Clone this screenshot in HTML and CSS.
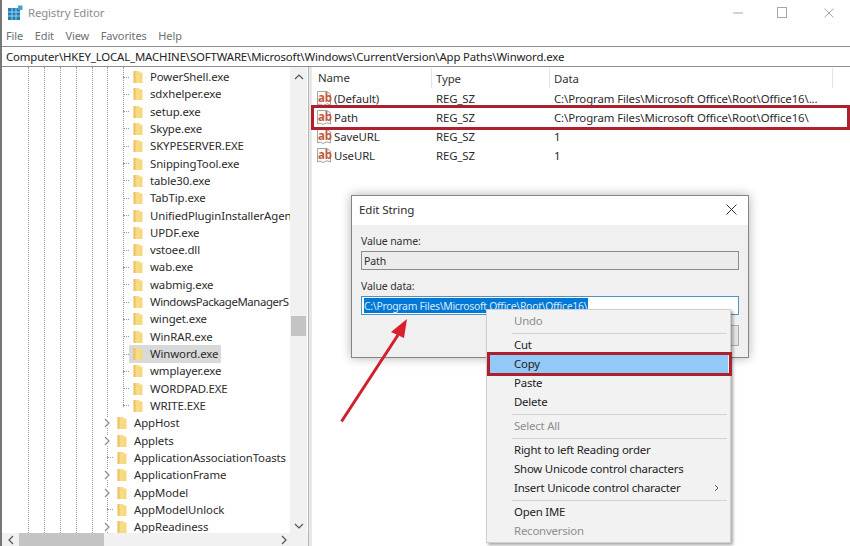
FILE: index.html
```html
<!DOCTYPE html>
<html lang="en">
<head>
<meta charset="utf-8">
<title>Registry Editor</title>
<link rel="stylesheet" href="styles.css">
</head>
<body>
<svg class="defs" width="0" height="0" aria-hidden="true">
  <defs>
    <linearGradient id="fold" x1="0" x2="1" y1="0" y2="0">
      <stop offset="0" stop-color="#e3b850"/>
      <stop offset="0.35" stop-color="#f8dc88"/>
      <stop offset="1" stop-color="#f6d77c"/>
    </linearGradient>
    <symbol id="folder" viewBox="0 0 10 14">
      <path d="M0.5 1H6L7 2.5H9.5V13H0.5Z" fill="url(#fold)"/>
    </symbol>
    <symbol id="chev" viewBox="0 0 8 10">
      <path d="M2 1L6 5L2 9" fill="none" stroke="#8a8a8a" stroke-width="1.2"/>
    </symbol>
    <symbol id="strval" viewBox="0 0 16 17">
      <path d="M1.5 1.5H11L14.5 4V15L11 13.8 7 15.5 4 14 1.5 15Z" fill="#fbfbfb" stroke="#9a9a9a" stroke-width="0.9"/>
    </symbol>
  </defs>
</svg>

<div class="window">
  <header class="titlebar">
    <svg class="app-icon" width="15" height="16" viewBox="0 0 15 16">
      <rect x="0" y="3" width="12" height="12" fill="#1f7fb8"/>
      <path d="M4 3V15M8 3V15M0 7H12M0 11H12" stroke="#bfe0ef" stroke-width="0.8"/>
      <rect x="10" y="0.5" width="4.5" height="4.5" fill="#3fa6c9"/>
    </svg>
    <span class="title">Registry Editor</span>
    <div class="controls">
      <svg width="10" height="2" viewBox="0 0 10 2"><path d="M0 1H10" stroke="#a8a8a8"/></svg>
      <svg width="10" height="11" viewBox="0 0 10 11"><rect x="0.5" y="0.5" width="9" height="10" fill="none" stroke="#a8a8a8"/></svg>
      <svg class="ctl-close" width="10" height="10" viewBox="0 0 10 10"><path d="M0.5 0.5L9.5 9.5M9.5 0.5L0.5 9.5" stroke="#a8a8a8"/></svg>
    </div>
  </header>
  <nav class="menubar">
    <span>File</span><span>Edit</span><span>View</span><span>Favorites</span><span>Help</span>
  </nav>
  <div class="address">Computer\HKEY_LOCAL_MACHINE\SOFTWARE\Microsoft\Windows\CurrentVersion\App Paths\Winword.exe</div>

  <main class="panes">
    <section class="tree-pane">
      <div class="tree-view">
        <div class="tree">
          <div class="guides"><i></i><i></i><i></i><i></i><i></i><i class="guide-short"></i><i class="guide-inner"></i></div>
          <div class="node leaf"><b class="tick"></b><svg class="folder"><use href="#folder"/></svg><span>PowerShell.exe</span></div>
          <div class="node leaf"><b class="tick"></b><svg class="folder"><use href="#folder"/></svg><span>sdxhelper.exe</span></div>
          <div class="node leaf"><b class="tick"></b><svg class="folder"><use href="#folder"/></svg><span>setup.exe</span></div>
          <div class="node leaf"><b class="tick"></b><svg class="folder"><use href="#folder"/></svg><span>Skype.exe</span></div>
          <div class="node leaf"><b class="tick"></b><svg class="folder"><use href="#folder"/></svg><span>SKYPESERVER.EXE</span></div>
          <div class="node leaf"><b class="tick"></b><svg class="folder"><use href="#folder"/></svg><span>SnippingTool.exe</span></div>
          <div class="node leaf"><b class="tick"></b><svg class="folder"><use href="#folder"/></svg><span>table30.exe</span></div>
          <div class="node leaf"><b class="tick"></b><svg class="folder"><use href="#folder"/></svg><span>TabTip.exe</span></div>
          <div class="node leaf"><b class="tick"></b><svg class="folder"><use href="#folder"/></svg><span>UnifiedPluginInstallerAgen</span></div>
          <div class="node leaf"><b class="tick"></b><svg class="folder"><use href="#folder"/></svg><span>UPDF.exe</span></div>
          <div class="node leaf"><b class="tick"></b><svg class="folder"><use href="#folder"/></svg><span>vstoee.dll</span></div>
          <div class="node leaf"><b class="tick"></b><svg class="folder"><use href="#folder"/></svg><span>wab.exe</span></div>
          <div class="node leaf"><b class="tick"></b><svg class="folder"><use href="#folder"/></svg><span>wabmig.exe</span></div>
          <div class="node leaf"><b class="tick"></b><svg class="folder"><use href="#folder"/></svg><span class="tight">WindowsPackageManagerS</span></div>
          <div class="node leaf"><b class="tick"></b><svg class="folder"><use href="#folder"/></svg><span>winget.exe</span></div>
          <div class="node leaf"><b class="tick"></b><svg class="folder"><use href="#folder"/></svg><span>WinRAR.exe</span></div>
          <div class="node leaf selected"><b class="tick"></b><svg class="folder"><use href="#folder"/></svg><span>Winword.exe</span></div>
          <div class="node leaf"><b class="tick"></b><svg class="folder"><use href="#folder"/></svg><span>wmplayer.exe</span></div>
          <div class="node leaf"><b class="tick"></b><svg class="folder"><use href="#folder"/></svg><span>WORDPAD.EXE</span></div>
          <div class="node leaf"><b class="tick"></b><svg class="folder"><use href="#folder"/></svg><span>WRITE.EXE</span></div>
          <div class="node branch"><svg class="chev"><use href="#chev"/></svg><svg class="folder"><use href="#folder"/></svg><span>AppHost</span></div>
          <div class="node branch"><svg class="chev"><use href="#chev"/></svg><svg class="folder"><use href="#folder"/></svg><span>Applets</span></div>
          <div class="node branch"><b class="tick tick-top"></b><svg class="folder"><use href="#folder"/></svg><span>ApplicationAssociationToasts</span></div>
          <div class="node branch"><svg class="chev"><use href="#chev"/></svg><svg class="folder"><use href="#folder"/></svg><span>ApplicationFrame</span></div>
          <div class="node branch"><svg class="chev"><use href="#chev"/></svg><svg class="folder"><use href="#folder"/></svg><span>AppModel</span></div>
          <div class="node branch"><b class="tick tick-top"></b><svg class="folder"><use href="#folder"/></svg><span>AppModelUnlock</span></div>
          <div class="node branch"><svg class="chev"><use href="#chev"/></svg><svg class="folder"><use href="#folder"/></svg><span>AppReadiness</span></div>
        </div>
        <div class="vscroll">
          <svg width="10" height="6" viewBox="0 0 10 6"><path d="M1 5L5 1L9 5" fill="none" stroke="#555" stroke-width="1.2"/></svg>
          <div class="vtrack"><div class="vthumb"></div></div>
          <svg width="10" height="6" viewBox="0 0 10 6"><path d="M1 1L5 5L9 1" fill="none" stroke="#555" stroke-width="1.2"/></svg>
        </div>
      </div>
      <div class="hscroll">
        <svg width="6" height="10" viewBox="0 0 6 10"><path d="M5 1L1 5L5 9" fill="none" stroke="#555" stroke-width="1.2"/></svg>
        <div class="hthumb"></div>
        <svg width="6" height="10" viewBox="0 0 6 10"><path d="M1 1L5 5L1 9" fill="none" stroke="#555" stroke-width="1.2"/></svg>
      </div>
    </section>

    <section class="list-pane">
      <div class="list-row list-head">
        <span class="col-name">Name</span><span class="col-type">Type</span><span class="col-data">Data</span>
      </div>
      <div class="list-row">
        <span class="col-name"><span class="ab"><svg class="ab-page"><use href="#strval"/></svg><span class="ab-text">ab</span></span>(Default)</span>
        <span class="col-type">REG_SZ</span><span class="col-data">C:\Program Files\Microsoft Office\Root\Office16\...</span>
      </div>
      <div class="list-row">
        <span class="col-name"><span class="ab"><svg class="ab-page"><use href="#strval"/></svg><span class="ab-text">ab</span></span>Path</span>
        <span class="col-type">REG_SZ</span><span class="col-data">C:\Program Files\Microsoft Office\Root\Office16\</span>
      </div>
      <div class="list-row">
        <span class="col-name"><span class="ab"><svg class="ab-page"><use href="#strval"/></svg><span class="ab-text">ab</span></span>SaveURL</span>
        <span class="col-type">REG_SZ</span><span class="col-data">1</span>
      </div>
      <div class="list-row">
        <span class="col-name"><span class="ab"><svg class="ab-page"><use href="#strval"/></svg><span class="ab-text">ab</span></span>UseURL</span>
        <span class="col-type">REG_SZ</span><span class="col-data">1</span>
      </div>
    </section>
  </main>
</div>

<div class="path-mark"></div>

<div class="dialog">
  <div class="dialog-title">
    <span>Edit String</span>
    <svg width="11" height="11" viewBox="0 0 11 11"><path d="M0.5 0.5L10.5 10.5M10.5 0.5L0.5 10.5" stroke="#333" stroke-width="1"/></svg>
  </div>
  <div class="dialog-body">
    <label class="field-label">Value name:</label>
    <div class="field field-off">Path</div>
    <label class="field-label">Value data:</label>
    <div class="field field-on"><span class="selection">C:\Program Files\Microsoft Office\Root\Office16\</span></div>
    <div class="dialog-actions"><div class="button"></div></div>
  </div>
</div>

<svg class="arrow" width="80" height="116" viewBox="0 0 80 116">
  <path d="M2.5 110.5L59 24" stroke="#d0202e" stroke-width="3" fill="none"/>
  <path d="M68 8L52 21L65 27Z" fill="#d9202e"/>
</svg>

<div class="menu">
  <div class="item off">Undo</div>
  <div class="sep"></div>
  <div class="item">Cut</div>
  <div class="item hot">Copy</div>
  <div class="item">Paste</div>
  <div class="item">Delete</div>
  <div class="sep"></div>
  <div class="item off">Select All</div>
  <div class="sep"></div>
  <div class="item">Right to left Reading order</div>
  <div class="item">Show Unicode control characters</div>
  <div class="item has-sub">Insert Unicode control character
    <svg width="5" height="8" viewBox="0 0 5 8"><path d="M1 1L4 4L1 7" fill="none" stroke="#555"/></svg>
  </div>
  <div class="sep"></div>
  <div class="item">Open IME</div>
  <div class="item off">Reconversion</div>
</div>
<div class="copy-mark"></div>
</body>
</html>
```
FILE: styles.css
```css
* { box-sizing: border-box; }
html, body { margin: 0; padding: 0; }
body {
  width: 850px;
  height: 546px;
  overflow: hidden;
  position: relative;
  background: #fff;
  font-family: "Noto Sans", "Open Sans", "Liberation Sans", sans-serif;
  font-size: 11.4px;
  letter-spacing: -0.1px;
  color: #2b2b2b;
}
.defs { position: absolute; }

.window {
  height: 546px;
  display: flex;
  flex-direction: column;
  border-left: 2px solid #777;
}
.titlebar {
  height: 25px;
  flex: none;
  display: flex;
  align-items: center;
  padding-left: 6px;
}
.app-icon { margin-right: 5px; margin-top: 1px; }
.title { color: #8c8c8c; font-size: 11.4px; letter-spacing: -0.15px; }
.controls {
  margin-left: auto;
  display: flex;
  align-items: center;
  gap: 34px;
  padding-right: 16px;
  padding-left: 2px;
}
.ctl-close { margin-left: 3px; }
.menubar {
  height: 21px;
  flex: none;
  display: flex;
  align-items: center;
  gap: 11.5px;
  padding: 0 0 1px 4px;
  color: #707070;
  font-size: 11px;
  letter-spacing: -0.1px;
}
.address {
  height: 21px;
  flex: none;
  border-top: 1px solid #8f8f8f;
  border-bottom: 1px solid #8f8f8f;
  padding-left: 4px;
  line-height: 19px;
  font-size: 11.4px;
  letter-spacing: -0.14px;
  color: #222;
  white-space: nowrap;
}

.panes { flex: 1; display: flex; min-height: 0; }
.tree-pane {
  width: 307px;
  flex: none;
  display: flex;
  flex-direction: column;
  border-right: 1px solid #b5b5b5;
  margin-right: 3px;
  box-shadow: 3px 0 0 #e8e8e8;
}
.tree-view { flex: 1; display: flex; min-height: 0; }
.tree {
  position: relative;
  width: 288px;
  padding-top: 1.4px;
  overflow: hidden;
}
.guides {
  position: absolute;
  inset: 0;
}
.guides i {
  position: absolute;
  top: 0;
  bottom: 0;
  border-left: 1px dotted #999;
}
.guides i:nth-child(1) { left: 26px; }
.guides i:nth-child(2) { left: 42px; }
.guides i:nth-child(3) { left: 58px; }
.guides i:nth-child(4) { left: 74px; }
.guides i:nth-child(5) { left: 90px; }
.guides i:nth-child(6) { left: 105px; }
.guides i.guide-inner { left: 121px; bottom: 126px; }

.node {
  position: relative;
  height: 17.32px;
  display: flex;
  align-items: center;
  white-space: nowrap;
}
.node span { position: relative; line-height: 12px; }
.node span.tight { letter-spacing: -0.42px; }
.leaf { padding-left: 121px; }
.branch { padding-left: 101px; }
.tick { flex: none; width: 6px; border-top: 1px dotted #999; margin-right: 4px; }
.tick-top { margin-left: 4px; margin-right: 4px; width: 6px; }
.chev { flex: none; width: 8px; height: 10px; margin-right: 6px; background: #fff; position: relative; }
.folder { width: 10px; height: 14px; margin-right: 7px; flex: none; position: relative; }
.selected span, .selected .folder { background: #d9d9d9; }
.selected span { padding: 3px 3px 3px 7px; margin-left: -7px; }
.selected .folder { height: 18px; }
.selected::before {
  content: "";
  position: absolute;
  left: 127px;
  width: 6px;
  top: 0;
  bottom: 0;
  background: #d9d9d9;
}

.vscroll {
  width: 17px;
  flex: none;
  display: flex;
  flex-direction: column;
  align-items: center;
  background: #f1f1f1;
  padding: 7px 0 4px;
}
.vtrack { flex: 1; width: 100%; position: relative; }
.vthumb {
  position: absolute;
  left: 1px;
  right: 1px;
  top: 236px;
  height: 20px;
  background: #c4c4c4;
}
.hscroll {
  height: 13px;
  flex: none;
  display: flex;
  align-items: center;
  background: #f1f1f1;
  padding: 0 21px 0 6px;
}
.hthumb { width: 85px; height: 13px; margin-left: 5px; background: #c4c4c4; }
.hscroll svg:last-child { margin-left: auto; }

.list-pane { flex: 1; min-width: 0; }
.list-row { display: flex; height: 19px; align-items: center; white-space: nowrap; }
.list-head { height: 22px; color: #333; }
.list-head span { height: 20px; line-height: 22px; border-right: 1px solid #e4e4e4; }
.col-name { width: 120px; padding-left: 6px; display: flex; align-items: center; flex: none; }
.col-type { width: 118px; padding-left: 4px; flex: none; }
.col-data { width: 283px; padding-left: 4px; flex: none; }
.list-row:not(.list-head) .col-name { padding-left: 4px; }
.ab {
  position: relative;
  width: 16px;
  height: 17px;
  margin-right: 2px;
  flex: none;
}
.ab-page { position: absolute; inset: 0; width: 16px; height: 17px; }
.ab-text {
  position: absolute;
  left: 2px;
  top: 1px;
  font-size: 11.5px;
  font-weight: 700;
  letter-spacing: -0.2px;
  line-height: 13px;
  color: #c45a3f;
}

.path-mark {
  position: absolute;
  left: 311px;
  top: 105px;
  width: 539px;
  height: 25px;
  border: 3px solid #ae202e;
}

.dialog {
  position: absolute;
  left: 351px;
  top: 195px;
  width: 398px;
  height: 163px;
  border: 1px solid #858585;
  background: #f0f0f0;
  box-shadow: 0 0 10px rgba(0,0,0,.3);
}
.dialog-title {
  height: 29px;
  background: #fff;
  display: flex;
  align-items: center;
  justify-content: space-between;
  padding: 0 11px 2px 7px;
  font-size: 11.6px;
}
.dialog-body { padding: 8px 9px 0; font-size: 10.5px; }
.field-label { display: block; height: 15px; line-height: 17px; color: #333; }
.field { height: 19px; margin-top: 3px; padding-left: 2px; line-height: 19px; }
.field-off { border: 1px solid #8c8c8c; background: #ececec; margin-bottom: 8px; }
.field-on { border: 1px solid #4f93c4; background: #fff; padding-top: 1px; line-height: 15px; }
.selection {
  display: inline-block;
  background: #0078d7;
  color: #dbeaf6;
  padding-right: 1px;
  height: 15px;
  line-height: 17px;
  font-size: 10.4px;
  letter-spacing: -0.28px;
}
.dialog-actions { display: flex; justify-content: flex-end; margin-top: 10px; }
.button { width: 19px; height: 21px; border: 1px solid #adadad; background: #e4e4e4; }

.arrow { position: absolute; left: 339px; top: 311px; }

.menu {
  position: absolute;
  left: 486px;
  top: 309px;
  width: 245px;
  height: 234px;
  padding: 2px;
  background: #f2f2f2;
  border: 1px solid #cfcfcf;
  box-shadow: 2px 2px 3px rgba(0,0,0,.35);
  font-size: 11.4px;
  letter-spacing: -0.2px;
}
.item {
  height: 19px;
  line-height: 17px;
  padding: 0 9px 2px 25px;
  color: #222;
  display: flex;
  align-items: center;
  justify-content: space-between;
}
.off { color: #8d8d8d; }
.hot { background: #91c9f7; }
.sep { height: 5px; position: relative; margin-left: 23px; margin-right: 1px; }
.sep::before {
  content: "";
  position: absolute;
  left: 0;
  right: 0;
  top: 2px;
  border-top: 1px solid #d2d2d2;
}
.copy-mark {
  position: absolute;
  left: 487px;
  top: 352px;
  width: 245px;
  height: 24px;
  border: 3px solid #ae202e;
}
```
